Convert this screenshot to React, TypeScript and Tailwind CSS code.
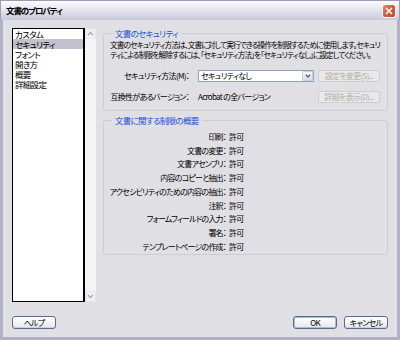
const items = ["カスタム", "セキュリティ", "フォント", "開き方", "概要", "詳細設定"];

const restrictions = [
  "印刷",
  "文書の変更",
  "文書アセンブリ",
  "内容のコピーと抽出",
  "アクセシビリティのための内容の抽出",
  "注釈",
  "フォームフィールドの入力",
  "署名",
  "テンプレートページの作成",
];

const Chevron = ({ up }: { up?: boolean }) => (
  <svg width="7" height="5" viewBox="0 0 7 5">
    <path
      d={up ? "M1 4 L3.5 1.5 L6 4" : "M1 1 L3.5 3.5 L6 1"}
      fill="none"
      stroke="#a8a8b4"
      strokeWidth="1.3"
    />
  </svg>
);

const XpButton = ({ label, isDefault }: { label: string; isDefault?: boolean }) => (
  <div
    className={`w-[44px] h-[13px] flex items-center justify-center rounded-[3px] border border-[#5b6b8c] bg-gradient-to-b from-[#ffffff] to-[#e8e8ec] text-[8px] leading-none ${
      isDefault ? "shadow-[inset_0_0_0_1px_#9ebbef]" : "shadow-[inset_0_-1px_0_#cfcfdb]"
    }`}
  >
    {label}
  </div>
);

const DisabledButton = ({ label }: { label: string }) => (
  <div className="w-[62px] h-[12px] flex items-center justify-center rounded-[2px] border border-[#cfcec8] bg-[#e9e8ec] text-[8px] leading-none text-[#b1b0a6] whitespace-nowrap">
    {label}
  </div>
);

export default function App() {
  return (
    <div className="w-[400px] h-[340px] flex flex-col bg-[#e0dfe3] text-black text-[8.5px] tracking-[-0.7px] font-['Noto_Sans_CJK_JP','Noto_Sans_CJK_SC',sans-serif] [font-feature-settings:'palt'] overflow-hidden">
      {/* title bar */}
      <div className="h-[20px] flex items-center justify-between pl-[5px] pr-[3px] bg-gradient-to-b from-[#fbfbfd] via-[#e4e3ec] to-[#c9c8d8] border-x border-t border-[#9d9cb4]">
        <span className="font-bold text-[8.5px] leading-none tracking-[-1.1px]">文書のプロパティ</span>
        <div className="w-[14px] h-[14px] rounded-[3px] border border-white bg-gradient-to-br from-[#e9876a] via-[#d45a36] to-[#c0462a] flex items-center justify-center">
          <svg width="8" height="8" viewBox="0 0 8 8">
            <path d="M1 1 L7 7 M7 1 L1 7" stroke="white" strokeWidth="1.6" />
          </svg>
        </div>
      </div>

      {/* body */}
      <div className="flex-1 flex flex-col border-x-[3px] border-b-[3px] border-[#b1b0c6] pt-[8px] pl-[9px] pr-[9px] pb-[8px]">
        <div className="flex h-[274px]">
          {/* list */}
          <div className="w-[73px] h-full bg-white border border-black border-r-2">
            {items.map((it, i) => (
              <div
                key={it}
                className={`h-[10px] leading-[10px] pl-[2px] whitespace-nowrap ${i === 1 ? "bg-[#c2c1cd]" : ""}`}
              >
                {it}
              </div>
            ))}
          </div>
          {/* scrollbar */}
          <div className="w-[11px] h-full bg-[#f5f5f7] flex flex-col justify-between">
            <div className="h-[11px] rounded-[2px] border border-[#e4e4ea] bg-[#f0f0f3] flex items-center justify-center">
              <Chevron up />
            </div>
            <div className="h-[11px] rounded-[2px] border border-[#e4e4ea] bg-[#f0f0f3] flex items-center justify-center">
              <Chevron />
            </div>
          </div>

          {/* right column */}
          <div className="w-[285px] ml-[7px] flex flex-col">
            <fieldset className="h-[83px] border border-[#cdccd4] rounded-[3px] px-[6px] pb-[7px] flex flex-col text-[8px]">
              <legend className="ml-[2px] px-[3px] text-[#1d55d3] leading-[10px] text-[8.5px]">文書のセキュリティ</legend>
              <p className="mt-[2px] leading-[10px] whitespace-nowrap text-[7.7px] tracking-[-0.9px]">
                文書のセキュリティ方法は、文書に対して実行できる操作を制限するために使用します。セキュリ
                <br />
                ティによる制限を解除するには、「セキュリティ方法」を「セキュリティなし」に設定してください。
              </p>
              <div className="flex items-center mt-[10px] h-[12px] -ml-[5px]">
                <div className="w-[84px] text-right whitespace-nowrap">セキュリティ方法(M)：</div>
                <div className="w-[116px] h-[12px] ml-[9px] bg-white border border-[#8fa0bd] flex items-center justify-between pl-[2px]">
                  <span className="leading-none">セキュリティなし</span>
                  <div className="w-[11px] h-[10px] rounded-[1px] border border-[#c9cfdd] bg-gradient-to-b from-[#f7f8fb] to-[#d9dde8] flex items-center justify-center">
                    <svg width="6" height="4" viewBox="0 0 6 4">
                      <path d="M0.8 0.8 L3 3 L5.2 0.8" fill="none" stroke="#4d6185" strokeWidth="1.3" />
                    </svg>
                  </div>
                </div>
                <div className="ml-[4px]">
                  <DisabledButton label="設定を変更(S)..." />
                </div>
              </div>
              <div className="flex items-center mt-[9px] h-[12px] -ml-[5px]">
                <div className="w-[84px] text-right whitespace-nowrap">互換性があるバージョン：</div>
                <div className="w-[116px] ml-[9px] whitespace-nowrap">Acrobat の全バージョン</div>
                <div className="ml-[4px]">
                  <DisabledButton label="詳細を表示(D)..." />
                </div>
              </div>
            </fieldset>

            <fieldset className="mt-[4px] h-[140px] border border-[#cdccd4] rounded-[3px] pt-[5px] text-[8px] tracking-[-0.8px]">
              <legend className="ml-[8px] px-[3px] text-[#1d55d3] leading-[10px] text-[8.5px] tracking-[-0.7px]">文書に関する制限の概要</legend>
              {restrictions.map((r) => (
                <div key={r} className="flex items-center h-[13.75px]">
                  <div className="w-[122px] text-right whitespace-nowrap">{r}：</div>
                  <div className="ml-[3px]">許可</div>
                </div>
              ))}
            </fieldset>
          </div>
        </div>

        <div className="mt-[14px] flex items-center">
          <XpButton label="ヘルプ" />
          <div className="flex-1" />
          <XpButton label="OK" isDefault />
          <div className="ml-[7px]">
            <XpButton label="キャンセル" />
          </div>
        </div>
      </div>
    </div>
  );
}
